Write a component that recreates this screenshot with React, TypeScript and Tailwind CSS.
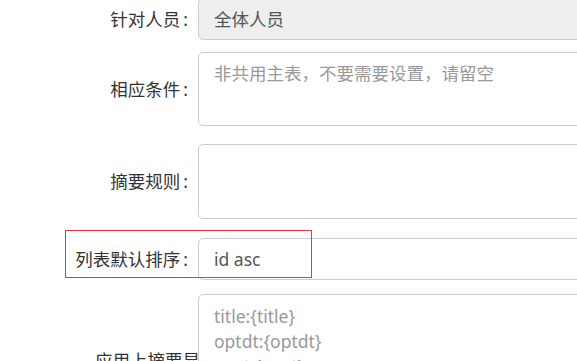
import React from "react";

const font = { fontFamily: '"Noto Sans", "Noto Sans CJK SC", sans-serif' };

function Label({ text }: { text: string }) {
  return (
    <div className="w-[188px] shrink-0 text-right text-[#333] whitespace-nowrap mr-[10px]">
      {text}
      <span className="pl-[3px]">:</span>
    </div>
  );
}

export default function App() {
  return (
    <div
      className="relative w-[577px] h-[361px] overflow-hidden bg-white text-[17.5px] leading-[25px]"
      style={font}
    >
      <div className="flex flex-col">
        {/* Row 1 */}
        <div className="flex items-center mt-[-2px]">
          <Label text="针对人员" />
          <div className="w-[430px] h-[42px] shrink-0 border border-[#ccc] rounded-[5px] bg-[#eee] px-[15px] flex items-center text-[#555]">
            全体人员
          </div>
        </div>
        {/* Row 2 */}
        <div className="flex items-center mt-[12px]">
          <Label text="相应条件" />
          <div className="w-[430px] h-[74px] shrink-0 border border-[#ccc] rounded-[5px] bg-white px-[15px] pt-[8px] text-[#999]">
            非共用主表，不要需要设置，请留空
          </div>
        </div>
        {/* Row 3 */}
        <div className="flex items-center mt-[18px]">
          <Label text="摘要规则" />
          <div className="w-[430px] h-[75px] shrink-0 border border-[#ccc] rounded-[5px] bg-white" />
        </div>
        {/* Row 4 */}
        <div className="flex items-center mt-[19px]">
          <Label text="列表默认排序" />
          <div className="w-[430px] h-[42px] shrink-0 border border-[#ccc] rounded-[5px] bg-white px-[15px] flex items-center text-[#555]">
            id asc
          </div>
        </div>
        {/* Row 5 */}
        <div className="flex items-center mt-[14px]">
          <div className="w-[188px] shrink-0 mr-[10px] pl-[95px] whitespace-nowrap text-[#333]">
            应用上摘要显示:
          </div>
          <div className="relative z-10 w-[430px] h-[132px] shrink-0 border border-[#ccc] rounded-[5px] bg-white px-[15px] pt-[9px] text-[#999]">
            <div>title:{"{title}"}</div>
            <div>optdt:{"{optdt}"}</div>
            <div>cont:{"{cont}"}</div>
          </div>
        </div>
      </div>
      {/* red highlight box */}
      <div className="absolute z-20 left-[65px] top-[230px] w-[247px] h-[48px] border border-[#e8383d] pointer-events-none" />
    </div>
  );
}
